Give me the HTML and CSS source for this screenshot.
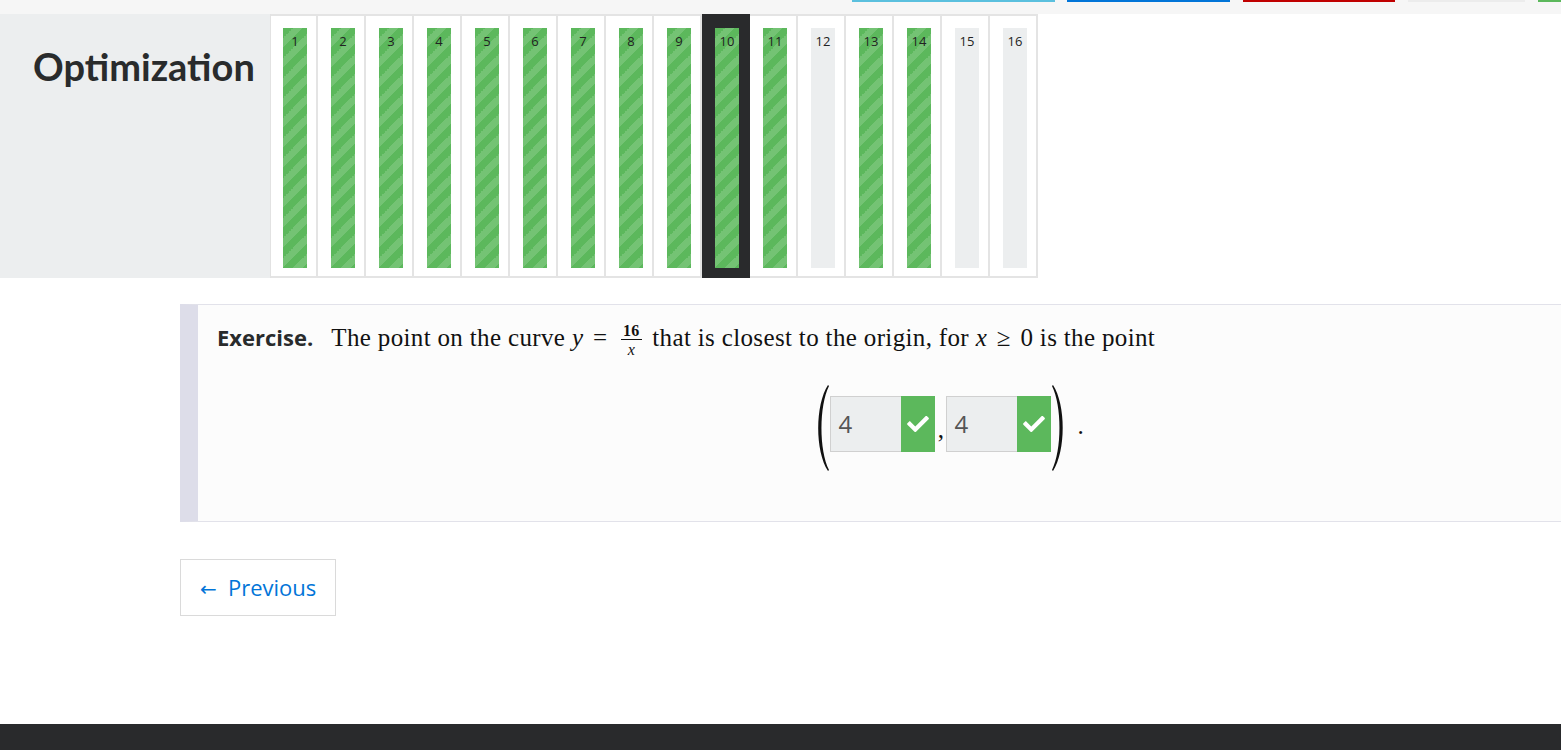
FILE: index.html
```html
<!DOCTYPE html>
<html lang="en">
<head>
<meta charset="utf-8">
<title>Optimization</title>
<link rel="stylesheet" href="styles.css">
</head>
<body>
<div class="topbar">
  <span class="strip strip-cyan"></span>
  <span class="strip strip-blue"></span>
  <span class="strip strip-red"></span>
  <span class="strip strip-gray"></span>
  <span class="strip strip-green"></span>
</div>

<div class="header">
  <div class="title-area"><h1 class="title">Optimization</h1></div>
  <div class="cells">
    <div class="cell"><div class="bar done"><span class="num">1</span></div></div>
    <div class="cell"><div class="bar done"><span class="num">2</span></div></div>
    <div class="cell"><div class="bar done"><span class="num">3</span></div></div>
    <div class="cell"><div class="bar done"><span class="num">4</span></div></div>
    <div class="cell"><div class="bar done"><span class="num">5</span></div></div>
    <div class="cell"><div class="bar done"><span class="num">6</span></div></div>
    <div class="cell"><div class="bar done"><span class="num">7</span></div></div>
    <div class="cell"><div class="bar done"><span class="num">8</span></div></div>
    <div class="cell"><div class="bar done"><span class="num">9</span></div></div>
    <div class="cell active"><div class="bar done"><span class="num">10</span></div></div>
    <div class="cell"><div class="bar done"><span class="num">11</span></div></div>
    <div class="cell"><div class="bar"><span class="num">12</span></div></div>
    <div class="cell"><div class="bar done"><span class="num">13</span></div></div>
    <div class="cell"><div class="bar done"><span class="num">14</span></div></div>
    <div class="cell"><div class="bar"><span class="num">15</span></div></div>
    <div class="cell"><div class="bar"><span class="num">16</span></div></div>
  </div>
</div>

<div class="exercise">
  <p class="statement"><b class="label">Exercise.</b><span class="math">The point on the curve <i>y</i> <span class="rel">=</span> <span class="frac"><span class="frac-num">16</span><span class="frac-den"><i>x</i></span></span> that is closest to the origin, for <i>x</i> <span class="rel">≥</span> 0 is the point</span></p>
  <div class="display">
    <svg class="paren" width="16" height="86" viewBox="0 0 16 86"><path d="M14 0 C1 20 1 66 14 86 L15 85 C5 65 5 21 15 1 Z" fill="#111"/></svg>
    <div class="answer">
      <span class="answer-input">4</span>
      <span class="answer-ok"><svg width="22" height="16" viewBox="0 68 512 376"><path d="M173.898 439.404l-166.4-166.4c-9.997-9.997-9.997-26.206 0-36.204l36.203-36.204c9.997-9.998 26.207-9.998 36.204 0L192 312.69 432.095 72.596c9.997-9.997 26.207-9.997 36.204 0l36.203 36.204c9.997 9.997 9.997 26.206 0 36.204l-294.4 294.401c-9.998 9.997-26.207 9.997-36.204-.001z" fill="#fff"/></svg></span>
    </div>
    <span class="comma">,</span>
    <div class="answer">
      <span class="answer-input">4</span>
      <span class="answer-ok"><svg width="22" height="16" viewBox="0 68 512 376"><path d="M173.898 439.404l-166.4-166.4c-9.997-9.997-9.997-26.206 0-36.204l36.203-36.204c9.997-9.998 26.207-9.998 36.204 0L192 312.69 432.095 72.596c9.997-9.997 26.207-9.997 36.204 0l36.203 36.204c9.997 9.997 9.997 26.206 0 36.204l-294.4 294.401c-9.998 9.997-26.207 9.997-36.204-.001z" fill="#fff"/></svg></span>
    </div>
    <svg class="paren" width="16" height="86" viewBox="0 0 16 86"><path d="M2 0 C15 20 15 66 2 86 L1 85 C11 65 11 21 1 1 Z" fill="#111"/></svg>
    <span class="period">.</span>
  </div>
</div>

<div class="actions">
  <a class="btn-prev" href="#"><span class="arrow">←</span>Previous</a>
</div>

<footer class="footer"></footer>
</body>
</html>
```

FILE: styles.css
```css
html, body {
  margin: 0;
  padding: 0;
  overflow-x: hidden;
}
body {
  background: #fff;
  color: #292b2c;
  font-family: "Open Sans", "Noto Sans", sans-serif;
}

.topbar {
  height: 14px;
  background: #f6f6f6;
  display: flex;
  align-items: flex-start;
  padding-left: 852px;
}
.strip { height: 2px; display: block; }
.strip-cyan { width: 203px; background: #5bc0de; }
.strip-blue { width: 163px; margin-left: 12px; background: #0275d8; }
.strip-red { width: 152px; margin-left: 13px; background: #c00000; }
.strip-gray { width: 117px; margin-left: 13px; background: #ececec; }
.strip-green { flex: 1; margin-left: 13px; background: #5cb85c; }

.header {
  display: flex;
  height: 264px;
}
.title-area {
  width: 270px;
  background: #eceeef;
}
.title {
  margin: 0;
  padding: 29px 0 0 33px;
  font-family: "Lato", sans-serif;
  font-weight: 700;
  font-size: 38px;
  line-height: 46px;
  color: #292b2c;
}
.cells {
  display: flex;
  border-left: 1px solid #e2e2e2;
}
.cell {
  box-sizing: border-box;
  width: 48px;
  height: 264px;
  border-top: 2px solid #e4e4e4;
  border-bottom: 2px solid #e4e4e4;
  border-right: 2px solid #e4e4e4;
  padding: 12px 0 0 13px;
  background: #fff;
}
.cell:first-child { width: 47px; padding-left: 12px; }
.cell.active {
  background: #292a2c;
  border-color: #292a2c;
}
.bar {
  width: 24px;
  height: 240px;
  background: #eceeef;
  text-align: center;
}
.bar.done {
  background-color: #5cb85c;
  background-image: linear-gradient(-45deg, rgba(255,255,255,.15) 25%, transparent 25%, transparent 50%, rgba(255,255,255,.15) 50%, rgba(255,255,255,.15) 75%, transparent 75%, transparent);
  background-size: 20px 20px;
}
.num {
  display: block;
  padding-top: 6px;
  font-size: 13px;
  line-height: 14px;
  color: #222;
}

.exercise {
  box-sizing: border-box;
  width: 1520px;
  margin: 26px 0 0 180px;
  background: #fcfcfc;
  border-top: 1px solid #e2e2ea;
  border-bottom: 1px solid #e2e2ea;
  border-left: 18px solid #dddde9;
  padding: 15px 19px 50px 19px;
}
.statement {
  margin: 0;
  font-size: 22px;
  line-height: 34px;
  white-space: nowrap;
}
.label {
  font-family: "Open Sans", sans-serif;
  font-weight: 700;
  font-size: 22px;
  color: #292b2c;
  margin-right: 18px;
}
.math {
  font-family: "Liberation Serif", "DejaVu Serif", serif;
  font-size: 25px;
  letter-spacing: 0.35px;
  color: #111;
}
.math i { font-style: italic; }
.rel { margin: 0 3px; }
.frac {
  display: inline-flex;
  flex-direction: column;
  align-items: center;
  vertical-align: 10px;
  font-size: 16px;
  line-height: 13px;
  margin: 0 4px;
}
.frac-num {
  font-weight: 700;
  padding: 0 2px 2px;
  border-bottom: 1px solid #111;
}
.frac-den { padding-top: 3px; }

.display {
  margin-top: 29px;
  display: flex;
  justify-content: center;
  align-items: flex-start;
  height: 86px;
}
.paren { display: block; }
.answer {
  display: flex;
  height: 56px;
  margin-top: 11px;
}
.answer-input {
  box-sizing: border-box;
  width: 71px;
  height: 56px;
  background: #eceeef;
  border: 1px solid #d0d0d0;
  border-right: none;
  padding: 0 0 0 7px;
  font-family: "Open Sans", sans-serif;
  font-size: 24px;
  line-height: 54px;
  color: #555;
}
.answer-ok {
  width: 34px;
  height: 56px;
  background: #5cb85c;
  display: flex;
  align-items: center;
  justify-content: center;
}
.comma {
  width: 11px;
  margin-top: 32px;
  text-align: center;
  font-family: "Liberation Serif", serif;
  font-size: 25px;
  line-height: 25px;
  color: #111;
}
.period {
  margin: 28px 0 0 10px;
  font-family: "Liberation Serif", serif;
  font-size: 25px;
  line-height: 25px;
  color: #111;
}

.actions {
  margin: 37px 0 0 180px;
}
.btn-prev {
  display: inline-block;
  box-sizing: border-box;
  width: 156px;
  height: 57px;
  border: 1px solid #dadada;
  padding-left: 19px;
  font-family: "Open Sans", sans-serif;
  font-size: 22px;
  line-height: 54px;
  color: #0275d8;
  text-decoration: none;
}
.arrow {
  display: inline-block;
  width: 28px;
  font-family: "DejaVu Sans", sans-serif;
  font-size: 20px;
}

.footer {
  margin-top: 108px;
  height: 40px;
  background: #292a2c;
}
```
